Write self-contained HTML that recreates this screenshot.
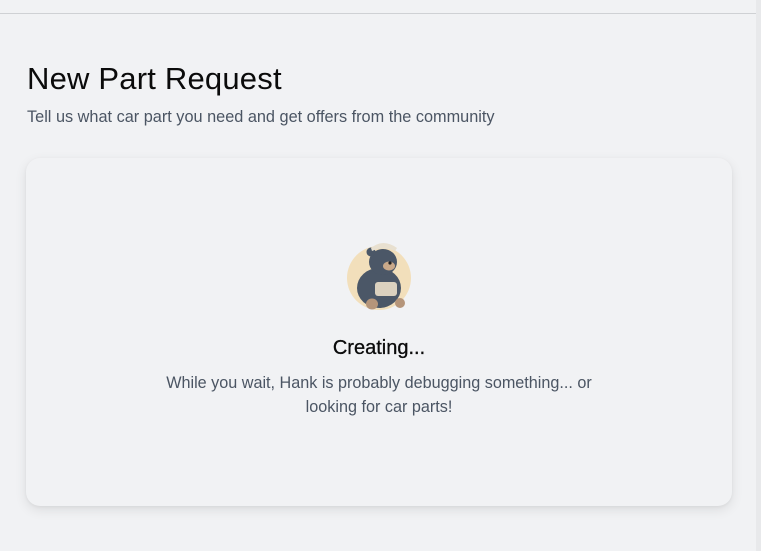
<!DOCTYPE html>
<html><head><style>
html,body{margin:0;padding:0}
body{width:761px;height:551px;background:#f1f2f4;font-family:"Liberation Sans",sans-serif;position:relative;overflow:hidden}
.sb{position:absolute;right:0;top:0;width:5px;height:551px;background:#e8e9eb}
.line{position:absolute;left:0;top:13px;width:756px;height:1px;background:#cfd1d4}
h1{position:absolute;left:27px;top:61px;margin:0;font-size:31px;font-weight:normal;color:#0b0b0b;letter-spacing:0.2px}
.sub{position:absolute;left:27px;top:108px;font-size:16.3px;color:#4b5563}
.card{position:absolute;left:26px;top:158px;width:706px;height:348px;background:#f1f2f4;border-radius:14px;box-shadow:0 4px 12px rgba(0,0,0,0.09),0 1px 3px rgba(0,0,0,0.05)}
.t{position:absolute;left:0;width:706px;text-align:center}
</style></head><body>
<div class="line"></div><div class="sb"></div>
<h1>New Part Request</h1>
<div class="sub">Tell us what car part you need and get offers from the community</div>
<div class="card">
<svg style="position:absolute;left:317px;top:80px" width="72" height="74" viewBox="0 0 72 74">
<circle cx="36" cy="40" r="32" fill="#f2dfbb"/>
<ellipse cx="36" cy="50" rx="22" ry="20" fill="#4b5767"/>
<ellipse cx="40" cy="24" rx="14" ry="13" fill="#4b5767"/>
<circle cx="28" cy="14" r="4.5" fill="#4b5767"/>
<path d="M28 10 Q40 0 54 10 L52 13 Q40 8 29 13Z" fill="#e8e0d0"/>
<ellipse cx="46" cy="28" rx="6" ry="4.5" fill="#c9a98a"/>
<circle cx="47" cy="25" r="1.6" fill="#222"/>
<ellipse cx="29" cy="66" rx="6" ry="5.5" fill="#b5957a"/>
<ellipse cx="57" cy="65" rx="5" ry="5" fill="#b5957a"/>
<rect x="32" y="44" width="22" height="14" rx="3" fill="#dbd1bf"/>
</svg>
<div class="t" style="top:179px;font-size:20px;color:#0b0b0b;-webkit-text-stroke:0.3px #0b0b0b">Creating...</div>
<div class="t" style="top:213px;font-size:16.2px;color:#4b5563;line-height:24px">While you wait, Hank is probably debugging something... or<br>looking for car parts!</div>
</div>
</body></html>
